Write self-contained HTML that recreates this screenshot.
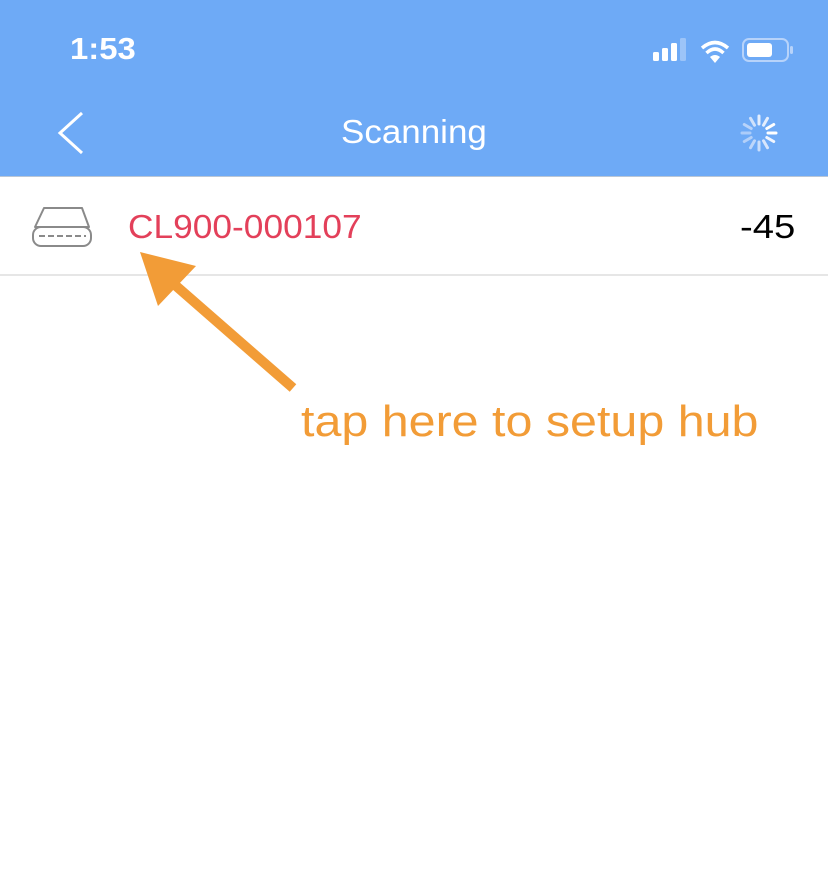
<!DOCTYPE html>
<html><head><meta charset="utf-8"><style>
body{margin:0;width:828px;height:892px;background:#fff;font-family:"Liberation Sans",Arial,sans-serif;position:relative;overflow:hidden}
.hdr{position:absolute;left:0;top:0;width:828px;height:176px;background:#6eaaf6;border-bottom:1px solid #b9c6d6}
.t{position:absolute;color:#fff}
.sx{display:inline-block;transform-origin:0 0}
</style></head><body>
<div class="hdr"></div>
<div class="t" style="left:70px;top:31px;font-size:31px;font-weight:bold;"><span class="sx" style="transform:scaleX(1.06)">1:53</span></div>
<svg style="position:absolute;left:650px;top:36px" width="150" height="30">
<rect x="3" y="16" width="6" height="9" rx="1.5" fill="#fff"/>
<rect x="12" y="12" width="6" height="13" rx="1.5" fill="#fff"/>
<rect x="21" y="7" width="6" height="18" rx="1.5" fill="#fff"/>
<rect x="30" y="2" width="6" height="23" rx="1.5" fill="#9cc4f8"/>
<path d="M52 12 Q65 1 78 12" stroke="#fff" stroke-width="3.5" fill="none"/>
<path d="M56.5 17 Q65 9 73.5 17" stroke="#fff" stroke-width="3.5" fill="none"/>
<path d="M60 21 L65 27 L70 21 Q65 17 60 21Z" fill="#fff"/>
<rect x="93" y="3" width="45" height="22" rx="6" stroke="#b7d3fa" stroke-width="2" fill="none"/>
<rect x="97" y="7" width="25" height="14" rx="3" fill="#fff"/>
<rect x="140" y="10" width="3" height="8" rx="1.5" fill="#b7d3fa"/>
</svg>
<svg style="position:absolute;left:55px;top:110px" width="30" height="46"><path d="M27 3 L5 23 L27 43" stroke="#fff" stroke-width="3" fill="none"/></svg>
<div class="t" style="left:341px;top:113px;font-size:33px;"><span class="sx" style="transform:scaleX(1.06)">Scanning</span></div>
<svg style="position:absolute;left:737px;top:111px" width="44" height="44" viewBox="-22 -22 44 44">
<g stroke-linecap="round" stroke-width="3">
<line x1="0" y1="-9" x2="0" y2="-17" stroke="#e4eefd" transform="rotate(0)"/>
<line x1="0" y1="-9" x2="0" y2="-17" stroke="#e4eefd" transform="rotate(30)"/>
<line x1="0" y1="-9" x2="0" y2="-17" stroke="#fff" transform="rotate(60)"/>
<line x1="0" y1="-9" x2="0" y2="-17" stroke="#fff" transform="rotate(90)"/>
<line x1="0" y1="-9" x2="0" y2="-17" stroke="#f0f5fe" transform="rotate(120)"/>
<line x1="0" y1="-9" x2="0" y2="-17" stroke="#d8e6fc" transform="rotate(150)"/>
<line x1="0" y1="-9" x2="0" y2="-17" stroke="#cadefb" transform="rotate(180)"/>
<line x1="0" y1="-9" x2="0" y2="-17" stroke="#bdd6fa" transform="rotate(210)"/>
<line x1="0" y1="-9" x2="0" y2="-17" stroke="#b3d0f9" transform="rotate(240)"/>
<line x1="0" y1="-9" x2="0" y2="-17" stroke="#acccf9" transform="rotate(270)"/>
<line x1="0" y1="-9" x2="0" y2="-17" stroke="#b8d3fa" transform="rotate(300)"/>
<line x1="0" y1="-9" x2="0" y2="-17" stroke="#cfe1fb" transform="rotate(330)"/>
</g></svg>
<svg style="position:absolute;left:30px;top:205px" width="64" height="45">
<path d="M14 3 H52 L59 22 H5 Z" stroke="#8a8a8a" stroke-width="2" fill="none" stroke-linejoin="round"/>
<rect x="3" y="22" width="58" height="19" rx="8" stroke="#8a8a8a" stroke-width="2" fill="none"/>
<line x1="9" y1="31" x2="56" y2="31" stroke="#8a8a8a" stroke-width="2" stroke-dasharray="6 3"/>
</svg>
<div style="position:absolute;left:128px;top:208px;font-size:33px;color:#e3405a"><span class="sx" style="transform:scaleX(1.07)">CL900-000107</span></div>
<div style="position:absolute;left:740px;top:208px;font-size:33px;color:#000"><span class="sx" style="transform:scaleX(1.16)">-45</span></div>
<div style="position:absolute;left:0;top:274px;width:828px;height:2px;background:#e6e6e6"></div>
<svg style="position:absolute;left:0;top:0" width="828" height="892">
<line x1="293" y1="388" x2="175" y2="285" stroke="#f29c37" stroke-width="10"/>
<path d="M140 252 L196 266 L158 306 Z" fill="#f29c37"/>
</svg>
<div style="position:absolute;left:301px;top:397px;font-size:44px;color:#f29c37;white-space:nowrap"><span class="sx" style="transform:scaleX(1.10)">tap here to setup hub</span></div>
</body></html>
